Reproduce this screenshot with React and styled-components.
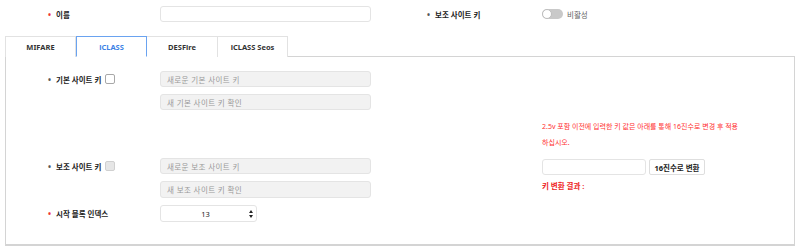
import React, { useState } from 'react';
import styled, { createGlobalStyle } from 'styled-components';

const GlobalStyle = createGlobalStyle`
  html, body {
    margin: 0;
    padding: 0;
    background: #ffffff;
  }
  body {
    font-family: "Noto Sans", "Noto Sans CJK KR", sans-serif;
    font-size: 7.5px;
    color: #222;
  }
`;

const Page = styled.div`
  width: 800px;
  height: 249px;
  overflow: hidden;
`;

const TopBar = styled.div`
  display: flex;
  height: 28px;
  align-items: center;
`;

const Half = styled.div`
  width: 400px;
  display: flex;
  align-items: center;
`;

const Row = styled.div`
  display: flex;
  align-items: center;
  height: ${props => props.h || 16}px;
  padding-left: ${props => props.indent || 0}px;
`;

const Label = styled.div`
  width: ${props => props.w || 112}px;
  display: flex;
  align-items: center;
  font-weight: 700;
  color: #222;
  white-space: nowrap;
`;

const Bullet = styled.span`
  color: ${props => props.required ? '#ee3333' : '#555'};
  margin-right: 5px;
  font-weight: 700;
  font-size: 8px;
`;

const TextInput = styled.div`
  box-sizing: border-box;
  width: ${props => props.w || 211}px;
  height: ${props => props.h || 16}px;
  border: 1px solid #e4e4e4;
  border-radius: 3px;
  background: ${props => props.disabled ? '#f2f2f2' : '#fff'};
  color: #999;
  padding-left: 6px;
  display: flex;
  align-items: center;
  letter-spacing: 0.4px;
  white-space: nowrap;
`;

const CheckBox = styled.span`
  box-sizing: border-box;
  width: 10px;
  height: 10px;
  margin-left: 4px;
  border: 1px solid ${props => props.disabled ? '#d0d0d0' : '#a8a8a8'};
  border-radius: 2px;
  background: ${props => props.disabled ? '#e6e6e6' : '#fff'};
`;

const Toggle = styled.span`
  position: relative;
  box-sizing: border-box;
  width: 21px;
  height: 10px;
  border-radius: 5px;
  background: #c9c9c9;
  &::after {
    content: '';
    position: absolute;
    left: 0;
    top: 0;
    width: 10px;
    height: 10px;
    box-sizing: border-box;
    border-radius: 50%;
    background: #fff;
    border: 1px solid #bdbdbd;
  }
`;

const ToggleText = styled.span`
  margin-left: 4px;
  color: #666;
`;

const Tabs = styled.div`
  display: flex;
  margin-top: 8px;
  padding-left: 5px;
`;

const Tab = styled.div`
  box-sizing: border-box;
  width: ${props => props.w || 71}px;
  height: 21px;
  display: flex;
  align-items: center;
  justify-content: center;
  font-weight: 700;
  color: ${props => props.active ? '#3c82e6' : '#333'};
  border: 1px solid ${props => props.active ? '#6aa3f0' : '#e2e2e2'};
  border-bottom: ${props => props.active ? '1px solid #fff' : 'none'};
  border-left: ${props => props.active ? '1px solid #6aa3f0' : props.first ? '1px solid #e2e2e2' : 'none'};
  margin-bottom: -1px;
  background: #fff;
  position: relative;
  z-index: ${props => props.active ? 1 : 0};
`;

const Panel = styled.div`
  box-sizing: border-box;
  margin-left: 5px;
  width: 790px;
  height: 190px;
  border: 1px solid #d4d4d4;
  border-bottom: 2px solid #d4d4d4;
  display: flex;
`;

const LeftCol = styled.div`
  box-sizing: border-box;
  width: 536px;
  padding-top: 14px;
  padding-left: 42px;
  display: flex;
  flex-direction: column;
`;

const Group = styled.div`
  display: flex;
  flex-direction: column;
  gap: 7px;
  margin-bottom: ${props => props.mb || 0}px;
`;

const InputStack = styled.div`
  display: flex;
  flex-direction: column;
  gap: 7px;
  margin-left: 112px;
`;

const RightCol = styled.div`
  padding-top: 62px;
  display: flex;
  flex-direction: column;
`;

const Notice = styled.div`
  color: #ff3030;
  font-size: 7px;
  line-height: 16px;
  white-space: nowrap;
`;

const HexRow = styled.div`
  display: flex;
  gap: 3px;
  margin-top: 8px;
`;

const Button = styled.div`
  box-sizing: border-box;
  width: 56px;
  height: 16px;
  border: 1px solid #dedede;
  border-radius: 2px;
  display: flex;
  align-items: center;
  justify-content: center;
  font-weight: 700;
  color: #222;
`;

const Result = styled.div`
  color: #ee1c1c;
  font-weight: 700;
  margin-top: 4px;
  line-height: 14px;
`;

const NumberBox = styled.div`
  box-sizing: border-box;
  width: 97px;
  height: 17px;
  border: 1px solid #e4e4e4;
  border-radius: 3px;
  display: flex;
  align-items: center;
  color: #222;
`;

const NumberValue = styled.span`
  flex: 1;
  text-align: center;
  padding-left: 4px;
`;

const Spinner = styled.span`
  width: 10px;
  display: flex;
  flex-direction: column;
  align-items: center;
  gap: 2px;
`;

const Arrow = styled.span`
  width: 0;
  height: 0;
  border-left: 2.5px solid transparent;
  border-right: 2.5px solid transparent;
  ${props => props.down
    ? 'border-top: 3px solid #222;'
    : 'border-bottom: 3px solid #222;'}
`;

const tabs = ['MIFARE', 'iCLASS', 'DESFire', 'iCLASS Seos'];

export default function App() {
  const [active] = useState('iCLASS');

  return (
    <Page>
      <GlobalStyle />
      <TopBar>
        <Half>
          <Row indent={48}>
            <Label><Bullet required>•</Bullet>이름</Label>
            <TextInput />
          </Row>
        </Half>
        <Half>
          <Row indent={27}>
            <Label w={115}><Bullet>•</Bullet>보조 사이트 키</Label>
            <Toggle />
            <ToggleText>비활성</ToggleText>
          </Row>
        </Half>
      </TopBar>

      <Tabs>
        {tabs.map((t, i) => (
          <Tab key={t} first={i === 0} active={t === active} w={i === 3 ? 70 : 71}>
            {t}
          </Tab>
        ))}
      </Tabs>

      <Panel>
        <LeftCol>
          <Group mb={48}>
            <Row>
              <Label><Bullet>•</Bullet>기본 사이트 키<CheckBox /></Label>
              <TextInput disabled>새로운 기본 사이트 키</TextInput>
            </Row>
            <InputStack>
              <TextInput disabled>새 기본 사이트 키 확인</TextInput>
            </InputStack>
          </Group>
          <Group>
            <Row>
              <Label><Bullet>•</Bullet>보조 사이트 키<CheckBox disabled /></Label>
              <TextInput disabled>새로운 보조 사이트 키</TextInput>
            </Row>
            <InputStack>
              <TextInput disabled h={17}>새 보조 사이트 키 확인</TextInput>
            </InputStack>
            <Row h={17}>
              <Label><Bullet required>•</Bullet>시작 블록 인덱스</Label>
              <NumberBox>
                <NumberValue>13</NumberValue>
                <Spinner>
                  <Arrow />
                  <Arrow down />
                </Spinner>
              </NumberBox>
            </Row>
          </Group>
        </LeftCol>
        <RightCol>
          <Notice>
            2.5v 포함 이전에 입력한 키 값은 아래를 통해 16진수로 변경 후 적용
            <br />
            하십시오.
          </Notice>
          <HexRow>
            <TextInput w={104} />
            <Button>16진수로 변환</Button>
          </HexRow>
          <Result>키 변환 결과 :</Result>
        </RightCol>
      </Panel>
    </Page>
  );
}
